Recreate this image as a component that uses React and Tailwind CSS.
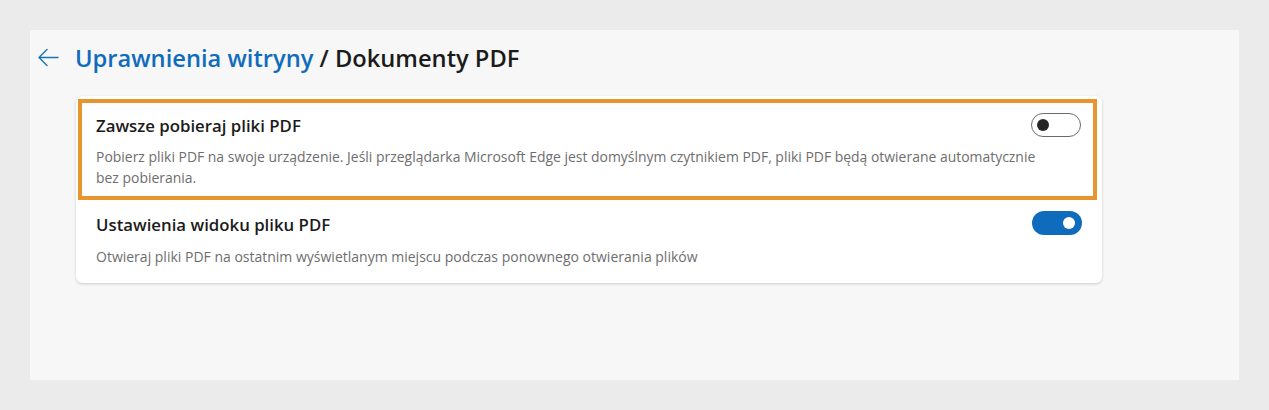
import React from "react";

function Toggle({ on }) {
  if (on) {
    return (
      <div className="flex h-[24px] w-[50px] shrink-0 items-center justify-end rounded-full bg-[#0f6cbd] pr-[7px]">
        <div className="h-[12px] w-[12px] rounded-full bg-white" />
      </div>
    );
  }
  return (
    <div className="flex h-[24px] w-[50px] shrink-0 items-center rounded-full border border-[#6b6b6b] bg-white pl-[5px]">
      <div className="h-[12px] w-[12px] rounded-full bg-[#262626]" />
    </div>
  );
}

export default function App() {
  return (
    <div
      className="h-[410px] w-[1269px] bg-[#ebebeb] p-[30px]"
      style={{ fontFamily: '"Segoe UI", "Open Sans", sans-serif' }}
    >
      <div className="h-[350px] w-[1209px] bg-[#f7f7f7] pt-[12px]">
        <div className="flex items-start">
          <svg width="46" height="32" viewBox="0 0 46 32" className="mt-[1px] shrink-0">
            <path
              d="M9 14.5 H28 M17 6.5 L9 14.5 L17 22.5"
              fill="none"
              stroke="#1a73b8"
              strokeWidth="1.4"
              strokeLinecap="round"
              strokeLinejoin="round"
            />
          </svg>
          <h1 className="-ml-px text-[23.7px] font-semibold leading-[32px] text-[#1b1b1b]">
            <span className="text-[#0f6cbd]">Uprawnienia witryny</span> / Dokumenty PDF
          </h1>
        </div>
        <div className="ml-[46px] mt-[21px] w-[1026px] rounded-[6px] bg-white pb-[16px] pt-[3px] shadow-[0_1px_3px_rgba(0,0,0,0.18)]">
          <div className="ml-[2px] mr-[5px] border-[4px] border-[#e8952e] pb-[8px] pl-[14px] pr-[12px] pt-[10px]">
            <div className="flex items-start justify-between">
              <div className="pt-[1px] text-[16.8px] font-semibold leading-[24px] text-[#1b1b1b]">
                Zawsze pobieraj pliki PDF
              </div>
              <Toggle on={false} />
            </div>
            <p className="mt-[8px] pr-[20px] text-[13.95px] leading-[21px] text-[#6e6e6e]">
              Pobierz pliki PDF na swoje urządzenie. Jeśli przeglądarka Microsoft Edge jest domyślnym czytnikiem PDF, pliki PDF będą otwierane automatycznie bez pobierania.
            </p>
          </div>
          <div className="px-[20px] pt-[11px]">
            <div className="flex items-start justify-between">
              <div className="pt-[2px] text-[16.8px] font-semibold leading-[24px] text-[#1b1b1b]">
                Ustawienia widoku pliku PDF
              </div>
              <Toggle on={true} />
            </div>
            <p className="mt-[9px] text-[14px] leading-[21px] text-[#6e6e6e]">
              Otwieraj pliki PDF na ostatnim wyświetlanym miejscu podczas ponownego otwierania plików
            </p>
          </div>
        </div>
      </div>
    </div>
  );
}
